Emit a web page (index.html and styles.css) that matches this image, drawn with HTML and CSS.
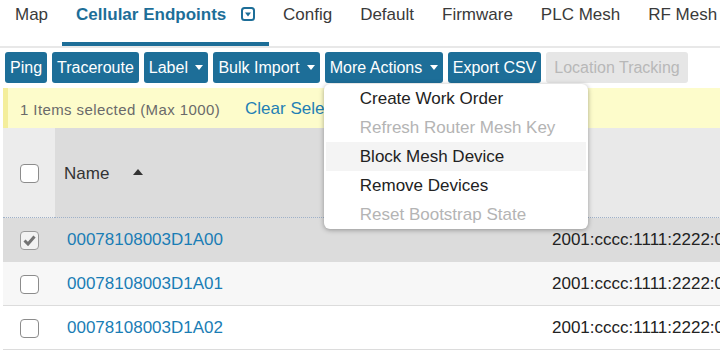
FILE: index.html
```html
<!DOCTYPE html>
<html lang="en">
<head>
  <meta charset="UTF-8" />
  <meta name="viewport" content="width=device-width, initial-scale=1.0"/>
  <title>Cellular Endpoints</title>
  <link rel="stylesheet" href="styles.css">
</head>
<body>

  <div class="tabs">
    <a class="tab">Map</a>
    <a class="tab active">Cellular Endpoints
      <svg class="tab-icon" width="14" height="14" viewBox="0 0 14 14">
        <rect x="1" y="1" width="12" height="12" rx="2.5" fill="none" stroke="#1d6e98" stroke-width="2"/>
        <path d="M4 5.5 L10 5.5 L7 9.5 Z" fill="#1d6e98"/>
      </svg>
    </a>
    <a class="tab">Config</a>
    <a class="tab">Default</a>
    <a class="tab">Firmware</a>
    <a class="tab">PLC Mesh</a>
    <a class="tab">RF Mesh</a>
  </div>

  <div class="toolbar">
    <button class="btn">Ping</button>
    <button class="btn">Traceroute</button>
    <button class="btn">Label <span class="caret"></span></button>
    <button class="btn">Bulk Import <span class="caret"></span></button>
    <div class="dropdown">
      <button class="btn">More Actions <span class="caret"></span></button>
      <ul class="menu">
        <li>Create Work Order</li>
        <li class="disabled">Refresh Router Mesh Key</li>
        <li class="hover">Block Mesh Device</li>
        <li>Remove Devices</li>
        <li class="disabled">Reset Bootstrap State</li>
      </ul>
    </div>
    <button class="btn">Export CSV</button>
    <button class="btn" disabled>Location Tracking</button>
  </div>

  <div class="selection-bar">
    <span class="count">1 Items selected (Max 1000)</span>
    <a class="clear">Clear Selection</a>
  </div>

  <table class="grid">
    <colgroup>
      <col class="col-check">
      <col class="col-name">
      <col class="col-ip">
    </colgroup>
    <thead>
      <tr>
        <th class="cell-check"><span class="check"></span></th>
        <th class="cell-name sorted">Name <span class="sort-up"></span></th>
        <th class="cell-ip"></th>
      </tr>
    </thead>
    <tbody>
      <tr class="selected">
        <td class="cell-check">
          <span class="check checked">
            <svg width="13" height="11" viewBox="0 0 13 11"><path d="M1.5 5.5 L5 9 L11.5 1.5" fill="none" stroke="#737373" stroke-width="3"/></svg>
          </span>
        </td>
        <td><a class="link">00078108003D1A00</a></td>
        <td>2001:cccc:1111:2222:0000:0000:0000:0001</td>
      </tr>
      <tr class="odd">
        <td class="cell-check"><span class="check"></span></td>
        <td><a class="link">00078108003D1A01</a></td>
        <td>2001:cccc:1111:2222:0000:0000:0000:0002</td>
      </tr>
      <tr>
        <td class="cell-check"><span class="check"></span></td>
        <td><a class="link">00078108003D1A02</a></td>
        <td>2001:cccc:1111:2222:0000:0000:0000:0003</td>
      </tr>
    </tbody>
  </table>

</body>
</html>
```

FILE: styles.css
```css
html, body {
  overflow: hidden;
}

body {
  margin: 0;
  padding: 0;
  font-family: "Liberation Sans", Arial, sans-serif;
  background: #fff;
  color: #222;
}

/* Top tabs */
.tabs {
  display: flex;
  white-space: nowrap;
  padding-left: 1px;
  height: 46px;
  border-bottom: 2px solid #e8e8e8;
}

.tab {
  box-sizing: border-box;
  height: 46px;
  padding: 5px 14px 0;
  font-size: 17px;
  line-height: 20px;
  color: #3a3a3a;
  flex-shrink: 0;
}

.tab.active {
  color: #1d6e98;
  font-weight: bold;
  border-bottom: 4px solid #1d6e98;
}

.tab-icon {
  margin-left: 10px;
  vertical-align: -1px;
}

/* Action buttons */
.toolbar {
  display: flex;
  gap: 5px;
  padding: 4px 0 0 5px;
  white-space: nowrap;
}

.btn {
  font-family: inherit;
  font-size: 16px;
  line-height: 19px;
  height: 31px;
  padding: 0 5px;
  border: none;
  border-radius: 3px;
  background-color: #1d6e98;
  color: #fff;
}

.btn:disabled {
  background-color: #e6e6e6;
  color: #b8b8b8;
  padding: 0 8px;
}

.caret {
  display: inline-block;
  width: 0;
  height: 0;
  margin-left: 3px;
  border-top: 5px solid #fff;
  border-left: 4px solid transparent;
  border-right: 4px solid transparent;
  vertical-align: 3px;
}

.dropdown {
  position: relative;
}

.menu {
  position: absolute;
  top: 32px;
  left: -1px;
  z-index: 5;
  width: 264px;
  margin: 0;
  padding: 0;
  list-style: none;
  background: #fff;
  border-radius: 6px;
  box-shadow: 0 1px 5px rgba(0, 0, 0, 0.35);
}

.menu li {
  height: 29px;
  line-height: 29px;
  margin: 0 2px;
  padding-left: 34px;
  font-size: 17px;
  color: #222;
}

.menu li.disabled {
  color: #b4b4b4;
}

.menu li.hover {
  background-color: #f4f4f4;
}

/* Selection notice */
.selection-bar {
  display: flex;
  align-items: center;
  height: 40px;
  margin: 5px 0 0 3px;
  padding: 2px 0 0 12px;
  box-sizing: border-box;
  background-color: #fdfccb;
  border-left: 5px solid #f4ee9c;
  white-space: nowrap;
}

.count {
  font-size: 15px;
  letter-spacing: 0.4px;
  color: #6a6a6a;
}

.clear {
  margin-left: 25px;
  font-size: 17px;
  color: #1f80b5;
}

/* Device table */
.grid {
  margin-left: 3px;
  width: 1000px;
  table-layout: fixed;
  border-collapse: collapse;
  white-space: nowrap;
}

.col-check { width: 52px; }
.col-name { width: 485px; }

.grid th {
  height: 86px;
  padding: 0;
  text-align: left;
  font-weight: normal;
  font-size: 17px;
  color: #333;
  background-color: #e9e9e9;
  border-bottom: 1px dotted #9fb1c9;
}

.grid th.cell-check {
  background-color: #ececec;
}

.grid th.sorted {
  background-color: #dcdcdc;
  padding-left: 9px;
  padding-top: 3px;
}

.sort-up {
  display: inline-block;
  width: 0;
  height: 0;
  margin-left: 19px;
  border-bottom: 6px solid #333;
  border-left: 5px solid transparent;
  border-right: 5px solid transparent;
  vertical-align: 4px;
}

.grid td {
  height: 43px;
  padding: 0 0 0 12px;
  font-size: 17px;
  color: #222;
  border-bottom: 1px solid #dcdcdc;
}

.grid td.cell-check,
.grid th.cell-check {
  padding-left: 17px;
}

.grid tr.selected td {
  background-color: #dcdcdc;
}

.grid tr.odd td {
  background-color: #f7f7f7;
}

.link {
  color: #1a7db5;
}

.check {
  display: inline-block;
  box-sizing: border-box;
  width: 19px;
  height: 19px;
  border: 1px solid #8c8c8c;
  border-radius: 4px;
  background: #fff;
  vertical-align: middle;
  text-align: center;
}

.check.checked {
  background: #f2f2f2;
  border-color: #9a9a9a;
}

.check svg {
  display: block;
  margin: 3px auto 0;
}
```
